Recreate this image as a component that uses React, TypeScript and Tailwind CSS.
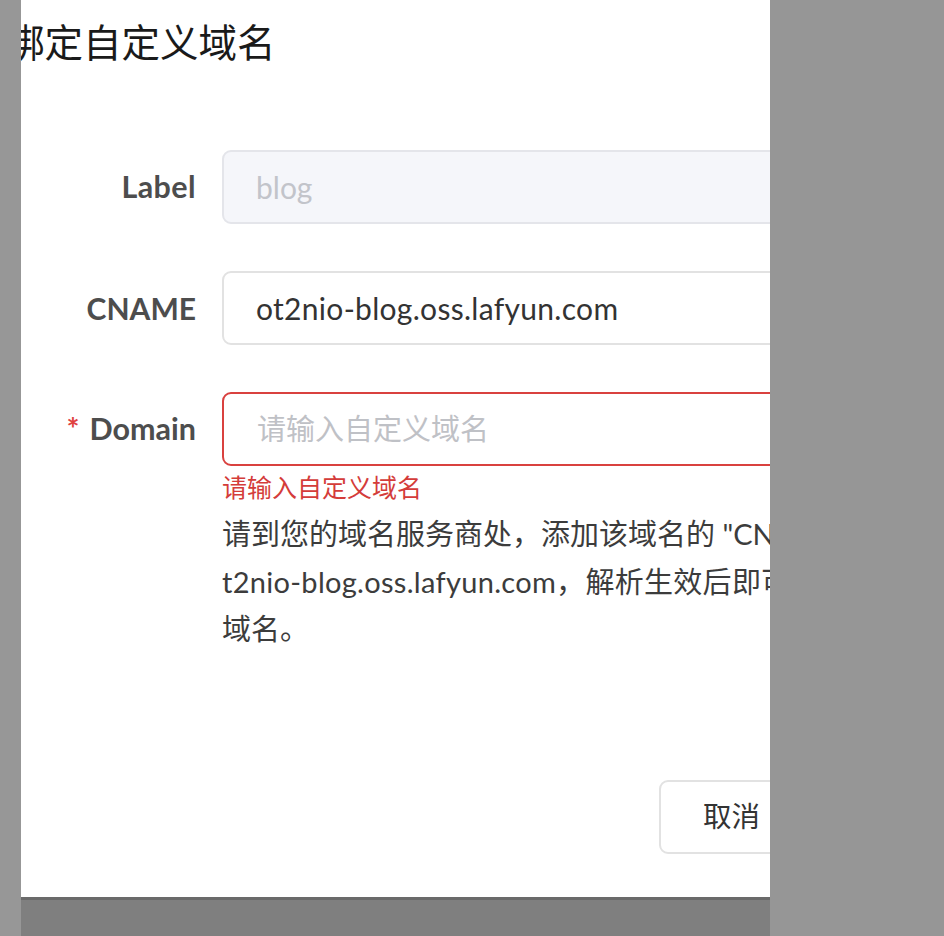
export default function App() {
  return (
    <div className="flex w-[944px] h-[936px] bg-[#969696] font-['Lato','Noto_Sans_CJK_SC',sans-serif]">
      {/* left backdrop strip */}
      <div className="w-[21px] shrink-0 bg-[#979797]" />

      {/* modal column */}
      <div className="flex flex-col w-[749px] shrink-0">
        <div className="h-[897px] bg-white overflow-hidden">

          {/* HEADER */}
          <div className="h-[80px] flex items-center ml-[-15px] whitespace-nowrap">
            <h1 className="text-[38.5px] leading-none text-[#1a1a1a] font-['Noto_Sans_CJK_SC',sans-serif]">
              绑定自定义域名
            </h1>
          </div>

          {/* FORM */}
          <div className="mt-[70px] flex flex-col gap-[47px]">

            <div className="flex items-center gap-[26px]">
              <label className="w-[175px] shrink-0 text-right text-[30.5px] font-bold tracking-[0.4px] text-[#4d4d4d]">
                Label
              </label>
              <div className="w-[800px] h-[74px] shrink-0 flex items-center pl-[32px] rounded-[9px] border-2 border-[#e4e5ea] bg-[#f5f6fa] text-[30px] text-[#c2c4ca]">
                blog
              </div>
            </div>

            <div className="flex items-center gap-[26px]">
              <label className="w-[175px] shrink-0 text-right text-[30px] font-bold text-[#4d4d4d]">
                CNAME
              </label>
              <div className="w-[800px] h-[74px] shrink-0 flex items-center pl-[32px] rounded-[9px] border-2 border-[#e2e2e2] bg-white text-[30px] tracking-[0.3px] text-[#333333]">
                ot2nio-blog.oss.lafyun.com
              </div>
            </div>

            <div className="flex items-start gap-[26px]">
              <label className="w-[175px] shrink-0 h-[74px] flex items-center justify-end text-[30.5px] font-bold text-[#4d4d4d]">
                <span className="text-[#e0413f] mr-[10px]">*</span>
                Domain
              </label>
              <div className="flex flex-col">
                <div className="w-[800px] h-[74px] shrink-0 flex items-center pl-[33px] rounded-[9px] border-2 border-[#d9413f] bg-white text-[29px] text-[#bfc1c6]">
                  请输入自定义域名
                </div>
                <p className="mt-[6px] text-[25px] leading-[30px] text-[#d43c3a]">
                  请输入自定义域名
                </p>
                <div className="mt-[8px] w-[800px] text-[29px] leading-[47.5px] text-[#3c3c3c] whitespace-nowrap">
                  <p>请到您的域名服务商处，添加该域名的 "CNAME" 记录，指向 o</p>
                  <p className="tracking-[0.3px]">t2nio-blog.oss.lafyun.com，解析生效后即可访问</p>
                  <p>域名。</p>
                </div>
              </div>
            </div>

          </div>

          {/* FOOTER */}
          <div className="mt-[127px] flex pl-[638px]">
            <button className="w-[200px] h-[74px] shrink-0 flex items-center pl-[42px] rounded-[9px] border-2 border-[#e2e2e2] bg-white text-[28.5px] text-[#333333]">
              取消
            </button>
          </div>

        </div>
        <div className="flex-1 bg-[#7f7f7f] border-t-[3px] border-[#6a6a6a]" />
      </div>

      {/* right backdrop */}
      <div className="flex-1 bg-[#969696]" />
    </div>
  );
}
